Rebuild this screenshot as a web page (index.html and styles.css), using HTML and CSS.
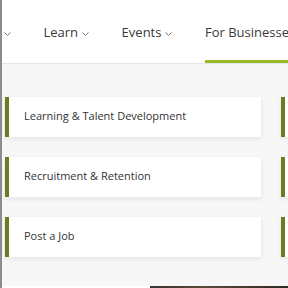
FILE: index.html
```html
<!DOCTYPE html>
<html lang="en">
<head>
    <meta charset="UTF-8">
    <meta name="viewport" content="width=device-width, initial-scale=1.0">
    <title>For Businesses</title>
    <link rel="stylesheet" href="styles.css">
</head>
<body>
    <!-- main navigation -->
    <nav class="main-nav">
        <ul class="nav-list">
            <li class="nav-item nav-item--cut">
                <svg class="chev" width="7" height="4" viewBox="0 0 7 4"><polyline points="0.5,0.5 3.5,3.5 6.5,0.5"/></svg>
            </li>
            <li class="nav-item">Learn
                <svg class="chev" width="7" height="4" viewBox="0 0 7 4"><polyline points="0.5,0.5 3.5,3.5 6.5,0.5"/></svg>
            </li>
            <li class="nav-item">Events
                <svg class="chev" width="7" height="4" viewBox="0 0 7 4"><polyline points="0.5,0.5 3.5,3.5 6.5,0.5"/></svg>
            </li>
            <li class="nav-item nav-item--active">For Businesses
                <svg class="chev" width="7" height="4" viewBox="0 0 7 4"><polyline points="0.5,0.5 3.5,3.5 6.5,0.5"/></svg>
            </li>
        </ul>
    </nav>

    <!-- dropdown panel -->
    <section class="mega-panel">
        <div class="link-grid">
            <a class="link-card" href="#">Learning &amp; Talent Development</a>
            <a class="link-card" href="#">Business Membership</a>
            <a class="link-card" href="#">Recruitment &amp; Retention</a>
            <a class="link-card" href="#">Partnerships</a>
            <a class="link-card" href="#">Post a Job</a>
            <a class="link-card" href="#">Advertise</a>
        </div>
    </section>

    <div class="hero-strip"></div>
</body>
</html>
```

FILE: styles.css
```css
body {
    margin: 0;
    height: 288px;
    overflow: hidden;
    border-left: 2px solid #8c8c8c;
    background-color: #ffffff;
    font-family: 'Open Sans', 'Noto Sans', sans-serif;
    color: #333;
}

/* top navigation */
.main-nav {
    height: 64px;
    box-sizing: border-box;
    border-bottom: 1px solid #e6e6e6;
    overflow: hidden;
}

.nav-list {
    display: flex;
    gap: 32.5px;
    height: 100%;
    margin: 0;
    padding: 0 0 0 2px;
    list-style: none;
}

.nav-item {
    display: flex;
    align-items: center;
    gap: 4px;
    box-sizing: border-box;
    padding-top: 4px;
    border-bottom: 3px solid transparent;
    font-size: 13px;
    white-space: nowrap;
    color: #3a3a3a;
}

.nav-item--active {
    border-bottom-color: #97b82b;
}

.chev {
    margin-top: 3px;
    fill: none;
    stroke: #7a7a7a;
    stroke-width: 1;
}

/* dropdown panel */
.mega-panel {
    height: 222px;
    box-sizing: border-box;
    padding: 33px 0 0 3px;
    background-color: #f7f7f7;
    overflow: hidden;
}

.link-grid {
    display: grid;
    grid-template-columns: 256px 256px;
    grid-auto-rows: 40px;
    gap: 20px;
}

.link-card {
    display: flex;
    align-items: center;
    padding: 0 0 3px 15px;
    border-left: 4px solid #6b7d23;
    background-color: #ffffff;
    box-shadow: 0 2px 6px rgba(0, 0, 0, 0.08);
    font-size: 11px;
    color: #333;
    text-decoration: none;
    white-space: nowrap;
}

.hero-strip {
    height: 2px;
    margin-left: 148px;
    background: linear-gradient(90deg, #3b3530, #5a4a3a 40%, #2e2a26);
}
```
